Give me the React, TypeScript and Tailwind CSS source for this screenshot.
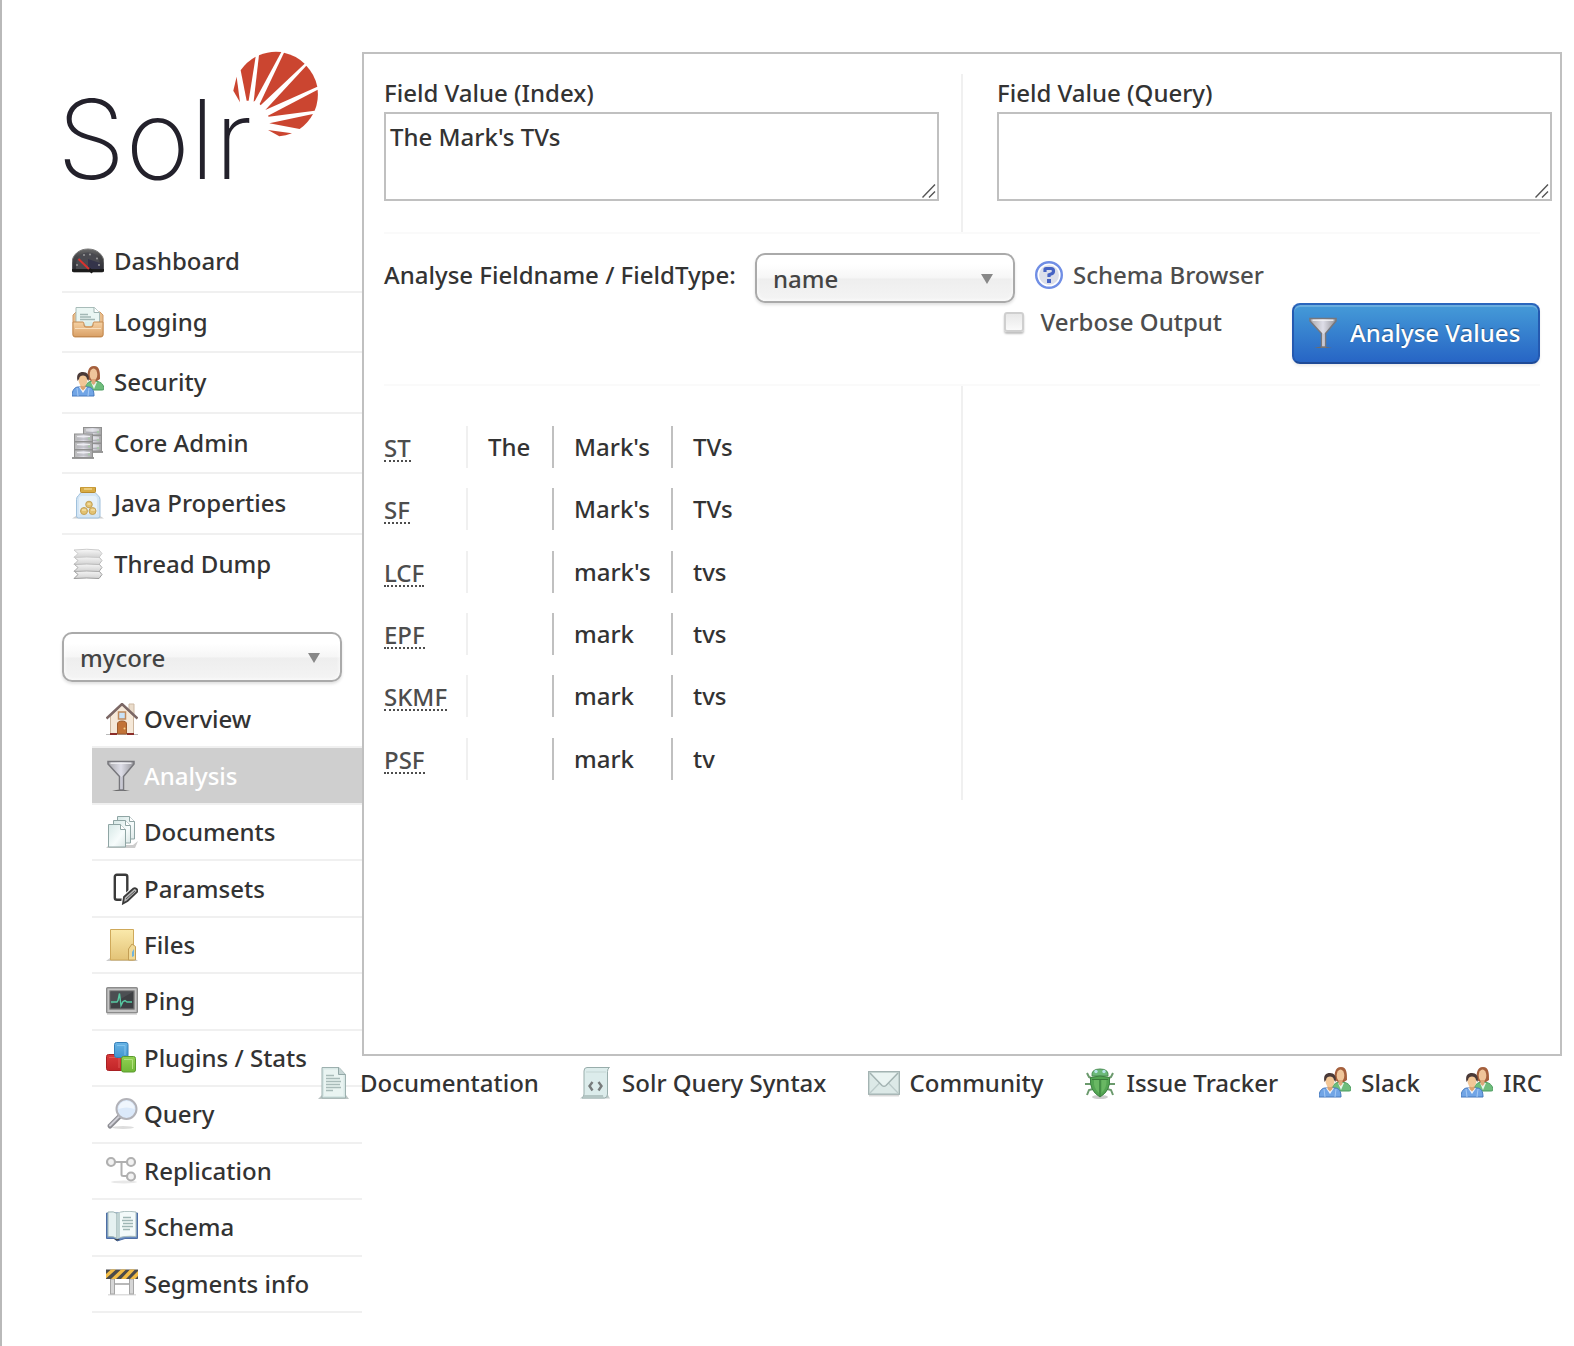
import React from "react";

type IconProps = { className?: string };

const svgProps = {
  viewBox: "0 0 32 32",
  "aria-hidden": true,
} as const;

function DashboardIcon() {
  return (
    <svg {...svgProps} className="size-8 shrink-0">
      <defs>
        <linearGradient id="dash" x1="0" y1="0" x2="0" y2="1">
          <stop offset="0" stopColor="#6b6b6b" />
          <stop offset=".35" stopColor="#454547" />
          <stop offset="1" stopColor="#2b2b35" />
        </linearGradient>
      </defs>
      <path d="M0 25V18C0 10 7 4 16 4s16 6 16 14v7q0 2-2 2H2q-2 0-2-2z" fill="url(#dash)" stroke="#777" strokeWidth="1" />
      <path d="M4 24v-5C5 11 10 7.500 16 7.500S27 11 28 19v5z" fill="#4a4a50" />
      <path d="M16 14l12 4v6H16z" fill="#34344a" />
      <path d="M0 24h32v1.500q0 1.500-2 1.500H2q-2 0-2-1.500z" fill="#1c1c1c" />
      <g fill="#9a9a9a">
        <circle cx="5" cy="20" r="1" /><circle cx="12" cy="10" r="1" /><circle cx="18" cy="9.500" r="1" />
        <circle cx="25" cy="13.500" r="1" /><circle cx="27" cy="20" r="1" />
      </g>
      <path d="M6.500 14 18 25" stroke="#d9322d" strokeWidth="2" />
      <path d="M17 24l3.500 3.500" stroke="#181818" strokeWidth="3" />
    </svg>
  );
}

function LoggingIcon() {
  return (
    <svg {...svgProps} className="size-8 shrink-0">
      <defs>
        <linearGradient id="tray" x1="0" y1="0" x2="0" y2="1">
          <stop offset="0" stopColor="#f6d2a4" />
          <stop offset="1" stopColor="#d9a066" />
        </linearGradient>
      </defs>
      <path d="M1 9l3-3h24l3 3v20q0 2-2 2H3q-2 0-2-2z" fill="#e9bd8b" stroke="#cf9a66" />
      <path d="M4 1.500h18.500l5 5V19H4z" fill="#eaf6f3" stroke="#a8bcb9" />
      <path d="M22 1.500v5h5.500" fill="#fff" stroke="#9eb4b1" />
      <path d="M8 8.500h8M8 11h11M8 13.500h15" stroke="#a3b8b5" strokeWidth="1.300" />
      <path d="M1 16h10q1 0 1 2v1q0 2 2 2h5q2 0 2-2v-1q0-2 1-2h9v12.500q0 2-2 2H3q-2 0-2-2z" fill="url(#tray)" stroke="#c48a50" />
      <path d="M13 15.500h7V19q0 1-1.500 1h-4Q13 20 13 19z" fill="#d9eeea" />
      <path d="M3 22.500h26" stroke="#f9dfbd" />
    </svg>
  );
}

function PeopleIcon() {
  return (
    <svg {...svgProps} className="size-8 shrink-0">
      <path d="M13 24c0-6 3-9 9-9s10 3 10 8q0 1-2 1z" fill="#6fbd7c" stroke="#4c9c60" />
      <path d="M19 16l3 7 3-7z" fill="#e9f5ea" />
      <path d="M16 13c-1-5-.5-13 6-13s6 8 6 13l-3 2h-6z" fill="#a5603d" />
      <ellipse cx="21.500" cy="8.500" rx="3.800" ry="6" fill="#efc59a" />
      <path d="M19.500 13h4v4l-2 2-2-2z" fill="#dea678" />
      <path d="M0 30c0-6 3-9 6-9h10c4 0 6 3 6 9z" fill="#71a5e6" stroke="#4679bd" />
      <path d="M5 22l1 8M17 22l-1 8" stroke="#a5caf5" />
      <path d="M7 21l4 6 4-6z" fill="#f2f5fa" />
      <path d="M8.500 18h5v4L11 24.500 8.500 22z" fill="#dca26f" />
      <ellipse cx="11" cy="14" rx="4.500" ry="6.200" fill="#f2c797" />
      <path d="M5.500 15C4 8 7 6 11 6s7 3 5.500 9L15 13c-.5-3-2-3.500-4-3.500S7.500 10 7 13z" fill="#4a3a38" />
    </svg>
  );
}

function ServerIcon() {
  const stack = (x: number, y: number) => (
    <g transform={`translate(${x} ${y})`}>
      {[0, 8, 16].map((o) => (
        <g key={o}>
          <rect x=".5" y={o + 0.5} width="18" height="7.500" fill="url(#rack)" stroke="#909090" />
          <path d={`M3 ${o + 3}h13`} stroke="#ededf2" />
          <path d={`M3 ${o + 5.500}h12`} stroke="#b0b0b8" />
          <circle cx="15" cy={o + 5} r="1" fill="#a5cba6" />
        </g>
      ))}
    </g>
  );
  return (
    <svg {...svgProps} className="size-8 shrink-0">
      <defs>
        <linearGradient id="rack" x1="0" y1="0" x2="1" y2="0">
          <stop offset="0" stopColor="#b5b5b5" />
          <stop offset=".5" stopColor="#dcdce4" />
          <stop offset="1" stopColor="#a3a3a3" />
        </linearGradient>
      </defs>
      <path d="M10 26h21v-2H10zM0 32h22v-2H0z" fill="#9a9a9a" />
      {stack(11, 0)}
      {stack(2, 6.500)}
    </svg>
  );
}

function JarIcon() {
  return (
    <svg {...svgProps} className="size-8 shrink-0">
      <path d="M0 31.500 4 29h24l4 2.500z" fill="#cfcfcf" />
      <path d="M9 5.500h14l3 3q2 1.500 2 4V29q0 2-2 2H6.500q-2 0-2-2V12.500q0-2.500 2-4z" fill="#d3e5f4" stroke="#9fc0dc" />
      <path d="M7 12q0-3 3-3h12q3 0 3 3v15H7z" fill="#e6f1f9" />
      <rect x="8.500" y="0" width="15" height="5.500" rx="1" fill="#d8ac45" stroke="#b98b2c" />
      <path d="M12 2h8" stroke="#f2d58a" strokeWidth="1.500" />
      <g fill="#e3c272" stroke="#c3a157">
        <circle cx="17" cy="17.500" r="3.300" /><circle cx="12" cy="24" r="3.500" /><circle cx="20.500" cy="24" r="3.500" />
      </g>
      <path d="M10 23h4M19 23h4M15.500 17h3" stroke="#f5e1a8" strokeWidth="1.300" />
    </svg>
  );
}

function ThreadIcon() {
  return (
    <svg {...svgProps} className="size-8 shrink-0">
      <defs>
        <linearGradient id="thread" x1="0" y1="0" x2="0" y2="1">
          <stop offset="0" stopColor="#f8f8f8" />
          <stop offset="1" stopColor="#d2d2d2" />
        </linearGradient>
      </defs>
      {[21.500, 14.500, 7.500, 0.500].map((y, i) => (
        <path
          key={y}
          transform={`translate(0 ${y})`}
          d="M2 1.500Q15 0 27 1.500L30 5l-3 4Q15 8 2 9l4-4z"
          fill="url(#thread)"
          stroke={["#9d9d9d", "#acacac", "#bcbcbc", "#cccccc"][i]}
        />
      ))}
    </svg>
  );
}

function HouseIcon() {
  return (
    <svg {...svgProps} className="size-8 shrink-0">
      <path d="M0 31h32v1H0z" fill="#bbb" />
      <path d="M23 1h5v10h-5z" fill="#eadccb" stroke="#cdb9a4" />
      <path d="M4.500 13 16 2l11.500 11v17.500h-23z" fill="#f5e8d8" stroke="#cdb69d" />
      <path d="M.5 15.500 16 1l15.500 14.500" fill="none" stroke="#7b6765" strokeWidth="2.500" />
      <rect x="12.500" y="9" width="7" height="7" fill="#c9e2f7" stroke="#c08a5c" strokeWidth="1.500" />
      <path d="M11.500 31V21q0-3 4.500-3t4.500 3v10z" fill="#c27338" stroke="#9c5a2c" />
      <circle cx="18.500" cy="25.500" r="1" fill="#f3d08c" />
      <path d="M4 31h7M21 31h7" stroke="#8b2c28" strokeWidth="2" />
    </svg>
  );
}

function FunnelIcon({ className = "size-8 shrink-0" }: IconProps) {
  return (
    <svg {...svgProps} className={className}>
      <defs>
        <linearGradient id="funnel" x1="0" y1="0" x2="1" y2="0">
          <stop offset="0" stopColor="#a9a9ad" />
          <stop offset=".5" stopColor="#dedee8" />
          <stop offset="1" stopColor="#949499" />
        </linearGradient>
      </defs>
      <path d="M6 31q8-3 18 0z" fill="#6d6d6d" />
      <path d="M2 1.500h26v2.500L17.500 16.500V30h-4V16.500L2 4z" fill="url(#funnel)" stroke="#77777c" strokeWidth="1.500" />
      <path d="M4.500 3.200h21" stroke="#f2f2f5" strokeWidth="1.300" />
      <path d="M15.500 17v12" stroke="#c8c8d4" strokeWidth="1.300" />
    </svg>
  );
}

function DocumentsIcon() {
  const sheet = (x: number, y: number) => (
    <g transform={`translate(${x} ${y})`}>
      <path d="M.5.5h12l5 5v17.500H.5z" fill="url(#sheet)" stroke="#8fa5a4" />
      <path d="M12.500.5v5h5" fill="#fff" stroke="#8fa5a4" />
    </g>
  );
  return (
    <svg {...svgProps} className="size-8 shrink-0">
      <defs>
        <linearGradient id="sheet" x1="0" y1="0" x2="1" y2="1">
          <stop offset="0" stopColor="#d6e8e6" />
          <stop offset=".6" stopColor="#f7fcfc" />
          <stop offset="1" stopColor="#dbe7e6" />
        </linearGradient>
      </defs>
      <path d="M0 32 3 29h24l5-4-3 7z" fill="#ccc" />
      {sheet(11, 0)}
      {sheet(7, 4)}
      {sheet(2, 8)}
    </svg>
  );
}

function ParamsetsIcon() {
  return (
    <svg {...svgProps} className="size-8 shrink-0">
      <rect x="8.800" y="1.800" width="12.500" height="25" rx="2" fill="none" stroke="#3a3a3a" strokeWidth="2.400" />
      <path d="M18 24 27.500 15.500q1.500-1 3 .5t.5 3L21.500 28 17 30.500z" fill="#c9c9c9" stroke="#fff" strokeWidth="4" />
      <path d="M18 24 27.500 15.500q1.500-1 3 .5t.5 3L21.500 28 17 30.500z" fill="#b5b5b5" stroke="#3a3a3a" strokeWidth="1.800" />
      <path d="M20 26l9-8" stroke="#555" />
    </svg>
  );
}

function FolderIcon() {
  return (
    <svg {...svgProps} className="size-8 shrink-0">
      <defs>
        <linearGradient id="folder" x1="0" y1="0" x2="0" y2="1">
          <stop offset="0" stopColor="#fae9ab" />
          <stop offset="1" stopColor="#e3c377" />
        </linearGradient>
      </defs>
      <path d="M0 32 4 29h24l4 3z" fill="#ccc" />
      <path d="M4.500.5h23V31h-23z" fill="url(#folder)" stroke="#cfa95a" />
      <path d="M22.500 31V20l3.500-5 3.500 2.500V31z" fill="#f0d996" stroke="#c39e54" />
      <path d="M26 28v-5l2-3v7z" fill="#6fb3dc" />
    </svg>
  );
}

function PingIcon() {
  return (
    <svg {...svgProps} className="size-8 shrink-0">
      <rect x=".7" y="2.700" width="30.600" height="25" rx="1" fill="#c4c4c4" stroke="#8c8c8c" strokeWidth="1.400" />
      <rect x="4" y="6" width="24" height="18" fill="#3d3f43" stroke="#737373" strokeWidth="1.300" />
      <path d="M4.500 6.500h23L4.500 20z" fill="#4c4f53" />
      <path d="M5 17h6l1-1.500 1.500-7L15 20.500l2-4 2-1 2 1.500h5" fill="none" stroke="#56c9a2" strokeWidth="1.400" />
      <path d="M1 29.500h30" stroke="#ddd" />
    </svg>
  );
}

function PluginsIcon() {
  return (
    <svg {...svgProps} className="size-8 shrink-0">
      <defs>
        <linearGradient id="blueb" x1="0" y1="0" x2="0" y2="1"><stop offset="0" stopColor="#69b5e6" /><stop offset="1" stopColor="#4294cf" /></linearGradient>
        <linearGradient id="redb" x1="0" y1="0" x2="0" y2="1"><stop offset="0" stopColor="#d83a3a" /><stop offset="1" stopColor="#c22528" /></linearGradient>
        <linearGradient id="greenb" x1="0" y1="0" x2="0" y2="1"><stop offset="0" stopColor="#93d152" /><stop offset="1" stopColor="#70b838" /></linearGradient>
      </defs>
      <rect x=".5" y="12.500" width="16.500" height="16" rx="2" fill="url(#redb)" stroke="#a82023" />
      <path d="M3 15.500h10V26" fill="none" stroke="#df5955" />
      <rect x="8.500" y=".5" width="13.500" height="15" rx="2" fill="url(#blueb)" stroke="#357fb8" />
      <path d="M11 3.500h8V13" fill="none" stroke="#83c4ee" />
      <rect x="15.500" y="14.500" width="14" height="15.500" rx="2" fill="url(#greenb)" stroke="#5a9a2e" />
      <path d="M18 17.500h8.500V27" fill="none" stroke="#b2e07e" />
    </svg>
  );
}

function QueryIcon() {
  return (
    <svg {...svgProps} className="size-8 shrink-0">
      <ellipse cx="17" cy="29.500" rx="11" ry="1.500" fill="#ddd" />
      <path d="M4 28 14 18" stroke="#8c8c92" strokeWidth="5" strokeLinecap="round" />
      <path d="M4 27.500 13 18.500" stroke="#cfcfd6" strokeWidth="2" strokeLinecap="round" />
      <circle cx="20.500" cy="11" r="10" fill="#dbe9fa" stroke="#b2b2b8" strokeWidth="2" />
      <path d="M12.500 11a8 8 0 0 1 16 0q-8-3-16 0z" fill="#f0f6fd" />
    </svg>
  );
}

function ReplicationIcon() {
  return (
    <svg {...svgProps} className="size-8 shrink-0">
      <ellipse cx="18" cy="27" rx="13" ry="1.500" fill="#e8e8e8" />
      <path d="M9 7h12M15.500 7v12.500q0 1.500 2 1.500H21" fill="none" stroke="#b0b0b0" strokeWidth="2" />
      <g fill="#f2f2f2" stroke="#b0b0b0" strokeWidth="2.200">
        <circle cx="5" cy="7" r="4" /><circle cx="25" cy="7" r="4" /><circle cx="25" cy="21.500" r="4" />
      </g>
    </svg>
  );
}

function BookIcon() {
  return (
    <svg {...svgProps} className="size-8 shrink-0">
      <path d="M.5 2h31v25.500H19L11 30l-2-2.500H.5z" fill="#6689c0" stroke="#4d6ea5" />
      <path d="M2 1q6-1 9 1.500v25Q8 25 2 25.500z" fill="#e6f1f1" stroke="#9db4b4" />
      <path d="M11 2.500Q17-1 30 1v24.500q-12-1-19 2z" fill="#f3fafa" stroke="#a9bdbd" />
      <path d="M11 2.500 14 1v25.500l-3 1z" fill="#c0d3d3" />
      <path d="M17 6.500h8M16 9.500h11M17 12.500h10M16 15.500h11M17 18.500h7" stroke="#9fb6b5" strokeWidth="1.300" />
      <path d="M8 28q3 3 6 0z" fill="#3e4552" />
    </svg>
  );
}

function BarrierIcon() {
  return (
    <svg {...svgProps} className="size-8 shrink-0">
      <path d="M2 26h28v1.500H2z" fill="#ddd" />
      <path d="M4 16h24" stroke="#b8b8b8" strokeWidth="2" />
      <g fill="#d6d6d6" stroke="#a5a5a5">
        <rect x="4.500" y="11" width="4" height="15" /><rect x="23.500" y="11" width="4" height="15" />
      </g>
      <rect x="0" y="1.500" width="32" height="9.500" fill="#4b4b4b" />
      <path d="M0 6 5 1.500h5L0 10.500zM5 11 15 1.500h5L10 11zM15 11 24 1.500h5L20 11zM24 11l8-8v5l-3 3z" fill="#f2bc45" />
    </svg>
  );
}

function PageIcon() {
  return (
    <svg {...svgProps} className="size-8 shrink-0">
      <path d="M0 32 4 28h24l3 4z" fill="#bcc4c3" />
      <path d="M4 .5h17l6.500 7V31H4z" fill="#d8e8e6" stroke="#9db0af" />
      <path d="M6 2.500h14l5.500 6V29H6z" fill="#eaf4f2" />
      <path d="M20.500.5v7h7" fill="#c7d6d5" stroke="#93a8a7" />
      <path d="M8 8.500h8M8 11.500h14M8 14.500h15M8 17.500h14M8 20.500h15M8 23.500h7" stroke="#a9bbb9" strokeWidth="1.500" />
    </svg>
  );
}

function ScriptIcon() {
  return (
    <svg {...svgProps} className="size-8 shrink-0">
      <path d="M0 31.500 4 28h24l2 3.500z" fill="#c3cccb" />
      <path d="M7 .5h22.500q-2 1-2 4V27q0 4-3 4H2q2-1 2-4V4Q4 .5 7 .5z" fill="#dceceb" stroke="#98adab" />
      <path d="M2 31q2-1 2-3h19q0 3 2 3z" fill="#b4c6c4" />
      <path d="M6 5h20" stroke="#c5d6d4" />
      <path d="M12.500 15 9.500 19l3 4.500M18.500 15l3 4-3 4.500" fill="none" stroke="#777b7b" strokeWidth="2.400" />
    </svg>
  );
}

function MailIcon() {
  return (
    <svg {...svgProps} className="size-8 shrink-0">
      <path d="M1 28.500h30" stroke="#dadada" strokeWidth="2" />
      <rect x=".7" y="4.700" width="30.600" height="22.500" fill="#dce9e7" stroke="#a3b3b2" strokeWidth="1.400" />
      <path d="M2 26 13 14.500M30 26 19 14.500" stroke="#bccbca" strokeWidth="1.300" />
      <path d="M2 6l12 12.500q2 1.500 4 0L30 6" fill="#eaf4f2" stroke="#a3b3b2" strokeWidth="1.500" />
    </svg>
  );
}

function BugIcon() {
  return (
    <svg {...svgProps} className="size-8 shrink-0">
      <ellipse cx="16" cy="30" rx="8" ry="2" fill="#ccc" />
      <path d="M9 12 5 10 3 6M23 12l4-2 2-4M8 17H1M24 17h7M9 22l-4 1-2 5M23 22l4 1 2 5" fill="none" stroke="#6b9a6d" strokeWidth="2" />
      <path d="M8 9q-1-7 8-7t8 7z" fill="#6cb878" stroke="#4c8f56" />
      <circle cx="12" cy="4.500" r="1.700" fill="#b6e3e8" /><circle cx="20" cy="4.500" r="1.700" fill="#b6e3e8" />
      <path d="M6.500 10.500q9.500-3 19 0 1.500 13-9.500 19.500Q5 23.500 6.500 10.500z" fill="#53a552" stroke="#3d8042" />
      <path d="M10 13q-1 8 5 13V13zM17.500 12.500V26q5.500-5 5-13z" fill="#69b763" />
      <path d="M16 12v17M8 12.500h16" stroke="#397a3a" />
    </svg>
  );
}

function HelpIcon() {
  return (
    <svg viewBox="0 0 28 28" aria-hidden className="size-7 shrink-0">
      <circle cx="14" cy="14" r="12.800" fill="#fff" stroke="#708ee5" strokeWidth="2.400" />
      <circle cx="14" cy="14" r="10" fill="#dcdfea" />
      <path d="M10 11V8.500q0-1 1-1h5q2.500 0 2.500 2.500t-2.500 3l-2 .8V16" fill="none" stroke="#4663c4" strokeWidth="3.200" />
      <rect x="12" y="18" width="4" height="4" fill="#4663c4" />
    </svg>
  );
}

function SolrLogo() {
  return (
    <svg viewBox="0 0 258 134" role="img" aria-label="Solr" className="block h-[134px] w-[258px] overflow-visible">
      <text x="-5" y="127" fontFamily="Inter, sans-serif" fontWeight="200" fontSize="110" fill="#23212b">
        Solr
      </text>
      <g transform="translate(-22 -22) scale(.3333)" fill="#cb4530">
        <path d="M590 140 600 217 580 182z" />
        <path d="M602 121A127 127 0 0 1 647 80L626 212H620z" />
        <path d="M657 76A127 127 0 0 1 724 66L645 212 641 215z" />
        <path d="M732 68A127 127 0 0 1 794 101L662 226 659 222z" />
        <path d="M799 107A127 127 0 0 1 832 170L676 240z" />
        <path d="M833 179A127 127 0 0 1 824 242L686 260 684 257z" />
        <path d="M819 252A127 127 0 0 1 779 297L688 280z" />
        <path d="M684 300 756 310Q738 317 718 319z" />
      </g>
    </svg>
  );
}

function ResizeGrip() {
  return (
    <svg viewBox="0 0 14 14" aria-hidden className="pointer-events-none absolute right-[3px] bottom-[3px] size-3.5">
      <path d="M.5 13.500 13 .5M7 13.500 13 7.500" stroke="#555" strokeWidth="1.400" />
    </svg>
  );
}

function Dropdown({ label, value, className }: { label: string; value: string; className: string }) {
  return (
    <div className={`relative h-[50px] ${className}`}>
      <select
        aria-label={label}
        defaultValue={value}
        className="h-full w-full appearance-none rounded-[10px] border-2 border-[#aaaaaa] bg-[linear-gradient(#ffffff_20%,#f6f6f6_50%,#eeeeee_52%,#f4f4f4_100%)] pt-0.5 pl-4 text-2xl font-medium text-[#444444] shadow-[0_2px_3px_rgba(0,0,0,0.12),inset_0_0_4px_#ffffff]"
      >
        <option>{value}</option>
      </select>
      <svg viewBox="0 0 12 10" aria-hidden className="pointer-events-none absolute top-[21px] right-[22px] h-2.5 w-3">
        <path d="M0 0h12L6 10z" fill="#888888" />
      </svg>
    </div>
  );
}

const mainMenu = [
  { label: "Dashboard", icon: <DashboardIcon /> },
  { label: "Logging", icon: <LoggingIcon /> },
  { label: "Security", icon: <PeopleIcon /> },
  { label: "Core Admin", icon: <ServerIcon /> },
  { label: "Java Properties", icon: <JarIcon /> },
  { label: "Thread Dump", icon: <ThreadIcon /> },
];

const coreMenu = [
  { label: "Overview", icon: <HouseIcon /> },
  { label: "Analysis", icon: <FunnelIcon /> },
  { label: "Documents", icon: <DocumentsIcon /> },
  { label: "Paramsets", icon: <ParamsetsIcon /> },
  { label: "Files", icon: <FolderIcon /> },
  { label: "Ping", icon: <PingIcon /> },
  { label: "Plugins / Stats", icon: <PluginsIcon /> },
  { label: "Query", icon: <QueryIcon /> },
  { label: "Replication", icon: <ReplicationIcon /> },
  { label: "Schema", icon: <BookIcon /> },
  { label: "Segments info", icon: <BarrierIcon /> },
];

const footerLinks = [
  { label: "Documentation", icon: <PageIcon /> },
  { label: "Solr Query Syntax", icon: <ScriptIcon /> },
  { label: "Community", icon: <MailIcon /> },
  { label: "Issue Tracker", icon: <BugIcon /> },
  { label: "Slack", icon: <PeopleIcon /> },
  { label: "IRC", icon: <PeopleIcon /> },
];

const steps = [
  ["ST", "The", "Mark's", "TVs"],
  ["SF", "", "Mark's", "TVs"],
  ["LCF", "", "mark's", "tvs"],
  ["EPF", "", "mark", "tvs"],
  ["SKMF", "", "mark", "tvs"],
  ["PSF", "", "mark", "tv"],
];

function FieldValue({ id, label, value }: { id: string; label: string; value: string }) {
  return (
    <div>
      <label htmlFor={id} className="block h-[38px] leading-[38px]">{label}</label>
      <div className="relative">
        <textarea
          id={id}
          defaultValue={value}
          className="block h-[89px] w-full resize-none border-2 border-[#c0c0c0] px-1 py-1.5 leading-[34px] font-medium"
        />
        <ResizeGrip />
      </div>
    </div>
  );
}

export default function App() {
  return (
    <div className="flex min-h-screen border-l-2 border-[#b9b9b9] bg-white pr-3 font-['Noto_Sans',sans-serif] text-2xl leading-8 font-medium text-[#333333]">
      <aside className="w-[360px] shrink-0 pt-[52px] pl-[60px]">
        <a href="#home" className="block"><SolrLogo /></a>
        <nav aria-label="Main" className="mt-[46px] grid h-[363px] auto-rows-fr">
          {mainMenu.map(({ label, icon }) => (
            <a key={label} href="#main" className="flex items-center gap-2.5 border-b-2 border-[#f0f0f0] pl-2.5 last:border-transparent">
              {icon}
              {label}
            </a>
          ))}
        </nav>
        <Dropdown label="Core selector" value="mycore" className="mt-[37px] mr-5" />
        <nav aria-label="Core" className="mt-2.5 ml-[30px] grid h-[621px] auto-rows-fr">
          {coreMenu.map(({ label, icon }) => (
            <a
              key={label}
              href="#core"
              className={`flex items-center gap-1.5 border-b-2 border-[#f0f0f0] pl-3.5 ${label === "Analysis" ? "bg-[#cfcfcf] text-white" : ""}`}
            >
              {icon}
              {label}
            </a>
          ))}
        </nav>
      </aside>

      <div className="min-w-0 flex-1 pt-[52px]">
        <main className="min-h-[1004px] border-2 border-[#c0c0c0] p-5">
          <form onSubmit={(e) => e.preventDefault()}>
            <div className="grid grid-cols-2 border-b-2 border-[#fafafa]">
              <div className="-mr-px h-[158px] border-r-2 border-[#f0f0f0] pr-[22px]">
                <FieldValue id="index-value" label="Field Value (Index)" value="The Mark's TVs" />
              </div>
              <div className="-mr-3 pl-[35px]">
                <FieldValue id="query-value" label="Field Value (Query)" value="" />
              </div>
            </div>
            <div className="h-[152px] border-b-2 border-[#fafafa] pt-[19px]">
              <div className="flex items-start leading-[44px]">
                <span className="w-[371px] whitespace-nowrap">Analyse Fieldname / FieldType:</span>
                <Dropdown label="Analyse Fieldname / FieldType" value="name" className="w-[260px]" />
                <a href="#schema" className="ml-5 flex items-center gap-2.5 text-[#4d4d4d]">
                  <HelpIcon />
                  Schema Browser
                </a>
              </div>
              <div className="flex items-start justify-end gap-[70px]">
                <label className="flex items-center gap-4 pt-[3px] text-[#4d4d4d]">
                  <input
                    type="checkbox"
                    className="size-5 appearance-none rounded-[3px] border-2 border-[#cfcfcf] bg-[linear-gradient(#e8e8e8,#fafafa)] shadow-[0_2px_2px_rgba(0,0,0,0.25)]"
                  />
                  Verbose Output
                </label>
                <button
                  type="submit"
                  className="flex h-[61px] w-[248px] items-center gap-2.5 rounded-lg border-2 border-t-[#2a66bd] border-r-[#2459b0] border-b-[#1f4b97] border-l-[#2459b0] bg-[linear-gradient(#459bd8,#2765c5)] pb-0.5 pl-3.5 whitespace-nowrap text-white shadow-[inset_0_2px_0_rgba(255,255,255,0.2),0_2px_3px_rgba(0,0,0,0.08)] [text-shadow:0_-1px_1px_rgba(0,0,0,0.4)]"
                >
                  <FunnelIcon className="size-8 shrink-0" />
                  Analyse Values
                </button>
              </div>
            </div>
          </form>

          <div className="grid grid-cols-2">
            <div className="-mr-px h-[414px] border-r-2 border-[#f0f0f0] pt-[30px]">
              <table className="h-[374px] border-collapse text-left">
                <tbody>
                  {steps.map(([step, a, b, c]) => (
                    <tr key={step}>
                      <th scope="row" className="w-[84px] p-0 font-medium text-[#4d4d4d]">
                        <div className="h-[42px] border-r-2 border-[#f0f0f0] pt-1.5">
                          <abbr className="inline-block border-b-2 border-dotted border-[#4d4d4d] leading-[25px] no-underline">{step}</abbr>
                        </div>
                      </th>
                      <td className="w-[86px] p-0">
                        <div className="h-[42px] border-r-2 border-[#c0c0c0] pl-5 leading-[42px]">{a}</div>
                      </td>
                      <td className="w-[119px] p-0">
                        <div className="h-[42px] border-r-2 border-[#c0c0c0] pl-5 leading-[42px]">{b}</div>
                      </td>
                      <td className="p-0">
                        <div className="h-[42px] pl-5 leading-[42px]">{c}</div>
                      </td>
                    </tr>
                  ))}
                </tbody>
              </table>
            </div>
          </div>
        </main>

        <footer className="relative -ml-11 flex justify-between pt-[11px] pr-5">
          {footerLinks.map(({ label, icon }) => (
            <a key={label} href="#footer" className="flex items-center gap-2.5 whitespace-nowrap">
              {icon}
              {label}
            </a>
          ))}
        </footer>
      </div>
    </div>
  );
}
